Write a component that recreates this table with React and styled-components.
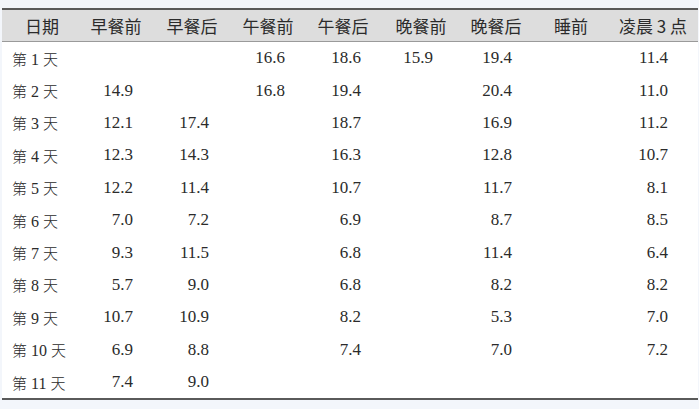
import React from 'react'
import styled, { createGlobalStyle } from 'styled-components'

const GlobalStyle = createGlobalStyle`
  html, body {
    margin: 0;
    padding: 0;
    background: #ffffff;
  }
`

const Page = styled.div`
  width: 699px;
  height: 409px;
  background: #f3f6fb;
  padding: 8px 0 0 2px;
  box-sizing: border-box;
`

const Table = styled.table`
  width: 696px;
  table-layout: fixed;
  border-collapse: collapse;
  background: #ffffff;
  border-top: 2px solid #5a5a5a;
  border-bottom: 2px solid #5a5a5a;
`

const HeadCell = styled.th`
  height: 31px;
  padding: 0;
  background: #dddddd;
  border-bottom: 1px solid #9a9a9a;
  font-family: 'Noto Sans CJK SC', 'Noto Sans', sans-serif;
  font-size: 17px;
  font-weight: 400;
  color: #2b2b2b;
  text-align: center;
  white-space: nowrap;
`

const DayCell = styled.td`
  height: 32.4px;
  padding: 0 0 0 10px;
  font-family: 'Liberation Serif', 'Noto Sans CJK SC', serif;
  font-size: 16px;
  color: #2b2b2b;
  white-space: nowrap;
`

const Han = styled.span`
  font-family: 'Noto Sans CJK SC', serif;
  font-size: 15px;
  font-weight: 300;
`

const NumCell = styled.td`
  height: 32.4px;
  padding: 0 ${(p) => p.$pr}px 0 0;
  font-family: 'Liberation Serif', serif;
  font-size: 17px;
  color: #2b2b2b;
  text-align: right;
`

const columns = [
  { title: '日期', width: 80 },
  { title: '早餐前', width: 68, pr: 17 },
  { title: '早餐后', width: 84, pr: 25 },
  { title: '午餐前', width: 68, pr: 17 },
  { title: '午餐后', width: 82, pr: 23 },
  { title: '晚餐前', width: 74, pr: 25 },
  { title: '晚餐后', width: 76, pr: 22 },
  { title: '睡前', width: 74, pr: 20 },
  { title: '凌晨 3 点', width: 90, pr: 30 },
]

const rows = [
  ['', '', '16.6', '18.6', '15.9', '19.4', '', '11.4'],
  ['14.9', '', '16.8', '19.4', '', '20.4', '', '11.0'],
  ['12.1', '17.4', '', '18.7', '', '16.9', '', '11.2'],
  ['12.3', '14.3', '', '16.3', '', '12.8', '', '10.7'],
  ['12.2', '11.4', '', '10.7', '', '11.7', '', '8.1'],
  ['7.0', '7.2', '', '6.9', '', '8.7', '', '8.5'],
  ['9.3', '11.5', '', '6.8', '', '11.4', '', '6.4'],
  ['5.7', '9.0', '', '6.8', '', '8.2', '', '8.2'],
  ['10.7', '10.9', '', '8.2', '', '5.3', '', '7.0'],
  ['6.9', '8.8', '', '7.4', '', '7.0', '', '7.2'],
  ['7.4', '9.0', '', '', '', '', '', ''],
]

export default function App() {
  return (
    <>
      <GlobalStyle />
      <Page>
        <Table>
          <colgroup>
            {columns.map((c) => (
              <col key={c.title} style={{ width: c.width }} />
            ))}
          </colgroup>
          <thead>
            <tr>
              {columns.map((c) => (
                <HeadCell key={c.title}>{c.title}</HeadCell>
              ))}
            </tr>
          </thead>
          <tbody>
            {rows.map((r, i) => (
              <tr key={i}>
                <DayCell>
                  <Han>第</Han> {i + 1} <Han>天</Han>
                </DayCell>
                {r.map((v, j) => (
                  <NumCell key={j} $pr={columns[j + 1].pr}>
                    {v}
                  </NumCell>
                ))}
              </tr>
            ))}
          </tbody>
        </Table>
      </Page>
    </>
  )
}
